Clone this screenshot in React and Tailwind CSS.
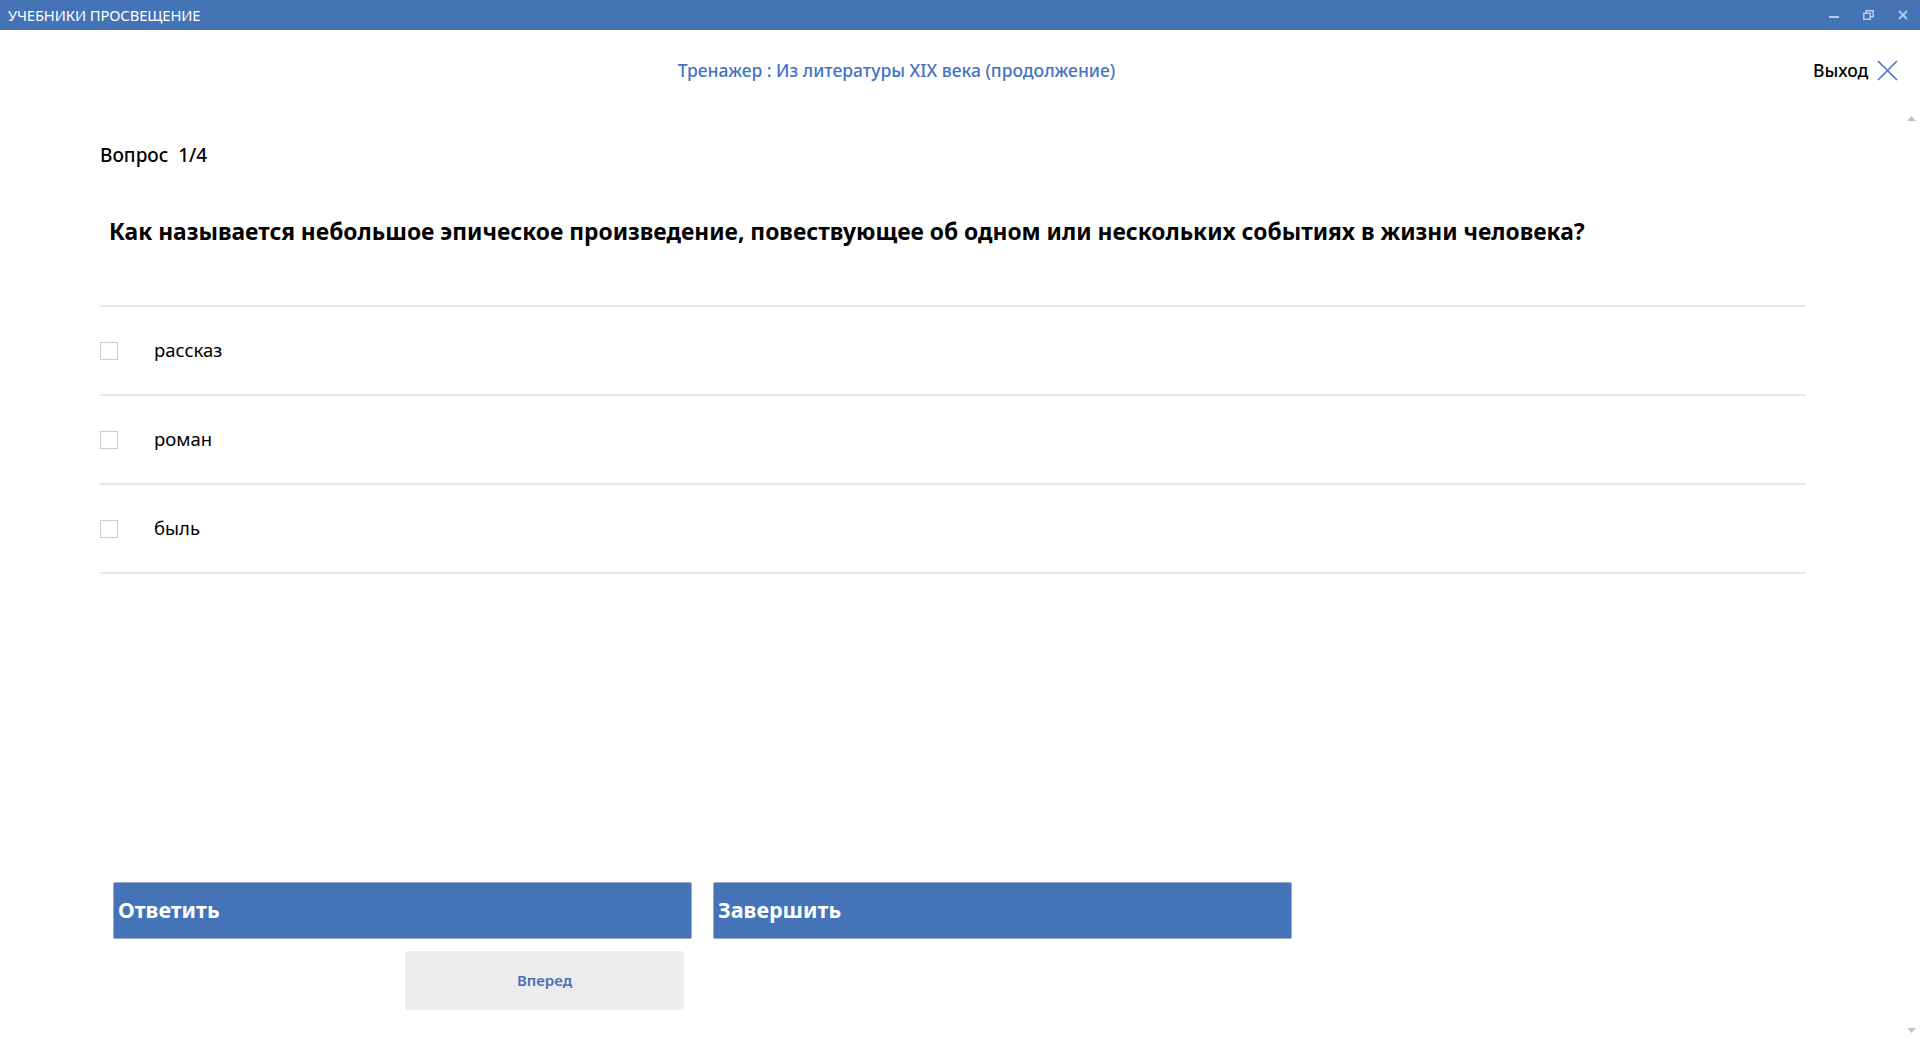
const answers = ['рассказ', 'роман', 'быль']

const TitleBar = () => (
  <div className="h-[30px] bg-[#4473b6] flex items-center justify-between pl-[8px] pr-[12px] shrink-0">
    <span className="text-white text-[14.75px] leading-none tracking-[-0.1px]">УЧЕБНИКИ ПРОСВЕЩЕНИЕ</span>
    <div className="flex items-center gap-[24px] text-[#b9cbe9]">
      <svg width="10" height="10" viewBox="0 0 10 10">
        <rect x="0" y="6" width="10" height="2" fill="currentColor" />
      </svg>
      <svg width="11" height="10" viewBox="0 0 11 10" fill="none" stroke="currentColor" strokeWidth="1.5">
        <rect x="0.75" y="3.25" width="6.5" height="6" />
        <path d="M3 3V0.75h7.25v6H7.5" />
      </svg>
      <svg width="10" height="10" viewBox="0 0 10 10" stroke="currentColor" strokeWidth="1.8">
        <path d="M1 1l8 8M9 1l-8 8" />
      </svg>
    </div>
  </div>
)

const Checkbox = () => (
  <span className="w-[18px] h-[18px] border border-[#cccccc] bg-white shrink-0" />
)

export default function App() {
  return (
    <div
      className="w-full h-[1039px] flex flex-col bg-white overflow-hidden text-black"
      style={{ fontFamily: '"Noto Sans", "Open Sans", sans-serif' }}
    >
      <TitleBar />

      <div className="h-[80px] flex items-center shrink-0">
        <div className="flex-1 text-center text-[17.5px] font-medium text-[#4472c4]">
          Тренажер : Из литературы XIX века (продолжение)
        </div>
        <div className="w-[127px] flex items-center gap-[9px] pl-[20px]">
          <span className="text-[17.5px] font-medium">Выход</span>
          <svg width="21" height="21" viewBox="0 0 21 21" stroke="#4472c4" strokeWidth="1.6">
            <path d="M1 1l19 19M20 1L1 20" />
          </svg>
        </div>
      </div>

      <div className="flex-1 flex min-h-0">
        <div className="flex-1 flex flex-col">
          <div className="pl-[100px] pr-[97px]">
            <div className="mt-[33px] text-[19px] font-medium leading-[24px]">Вопрос&nbsp; 1/4</div>
            <div className="mt-[50px] pl-[9px] text-[22.8px] font-bold leading-[30px]">
              Как называется небольшое эпическое произведение, повествующее об одном или нескольких событиях в жизни человека?
            </div>
            <div className="mt-[58px] border-t-2 border-[#e8e8e8]">
              {answers.map((a) => (
                <div key={a} className="h-[89px] border-b-2 border-[#e8e8e8] flex items-center">
                  <Checkbox />
                  <span className="ml-[36px] text-[18.5px] leading-none">{a}</span>
                </div>
              ))}
            </div>
          </div>

          <div className="mt-auto pl-[113px] pb-[29px]">
            <div className="flex gap-[21px]">
              <button className="w-[579px] h-[57px] bg-[#4473b7] border border-[#9aaac4] rounded-[2px] text-left pl-[4px] text-white text-[21.5px] font-bold">
                Ответить
              </button>
              <button className="w-[579px] h-[57px] bg-[#4473b7] border border-[#9aaac4] rounded-[2px] text-left pl-[4px] text-white text-[21.5px] font-bold">
                Завершить
              </button>
            </div>
            <div className="mt-[12px] ml-[292px] w-[279px] h-[59px] bg-[#ececec] rounded-[4px] flex items-center justify-center text-[15px] font-semibold text-[#4a6fb5]">
              Вперед
            </div>
          </div>
        </div>

        <div className="w-[17px] flex flex-col items-center justify-between pt-[6px] pb-[6px]">
          <svg width="9" height="5" viewBox="0 0 9 5">
            <path d="M0 5L4.5 0L9 5Z" fill="#c4c4c4" />
          </svg>
          <svg width="9" height="5" viewBox="0 0 9 5">
            <path d="M0 0L4.5 5L9 0Z" fill="#c4c4c4" />
          </svg>
        </div>
      </div>
    </div>
  )
}
